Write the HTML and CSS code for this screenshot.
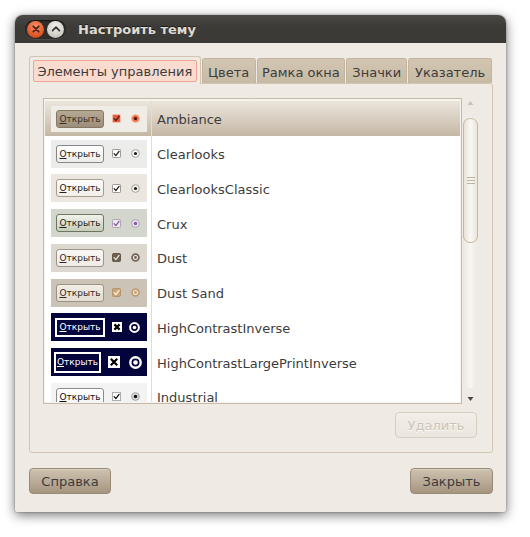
FILE: index.html
```html
<!DOCTYPE html>
<html lang="ru">
<head>
<meta charset="utf-8">
<title>Настроить тему</title>
<link rel="stylesheet" href="styles.css">
</head>
<body>
<div class="window">
  <div class="titlebar">
    <div class="wbtns">
      <span class="wb close"><svg width="16" height="16" viewBox="0 0 16 16"><path d="M5.3 5.3l5.4 5.4M10.7 5.3l-5.4 5.4" class="x"/></svg></span>
      <span class="wb max"><svg width="16" height="16" viewBox="0 0 16 16"><path d="M4.6 9.6L8 6.2l3.4 3.4" class="chev"/></svg></span>
    </div>
    <div class="title">Настроить тему</div>
  </div>
  <div class="body">
    <div class="tabs">
      <div class="tab active"><span class="focus">Элементы управления</span></div>
      <div class="tab w-colors">Цвета</div>
      <div class="tab w-frame">Рамка окна</div>
      <div class="tab w-icons">Значки</div>
      <div class="tab w-pointer">Указатель</div>
    </div>
    <div class="panel">
      <div class="scrolled">
        <div class="tree">
          <div class="rows">
            <div class="row selected">
              <div class="pvcell"><div class="pv t-amb"><span class="pbtn"><u>О</u>ткрыть</span><svg class="cb" width="9" height="9" viewBox="0 0 10 10"><rect class="o" x=".5" y=".5" width="9" height="9" rx="1.5"/><path class="m" d="M2.3 5.2l2 2.1L7.8 2.6"/></svg><svg class="rd" width="9" height="9" viewBox="0 0 10 10"><circle class="o" cx="5" cy="5" r="4.3"/><circle class="d" cx="5" cy="5" r="1.7"/></svg></div></div>
              <div class="name">Ambiance</div>
            </div>
            <div class="row">
              <div class="pvcell"><div class="pv t-clear"><span class="pbtn"><u>О</u>ткрыть</span><svg class="cb" width="9" height="9" viewBox="0 0 10 10"><rect class="o" x=".5" y=".5" width="9" height="9" rx="1"/><path class="m" d="M2.3 5.2l2 2.1L7.8 2.6"/></svg><svg class="rd" width="9" height="9" viewBox="0 0 10 10"><circle class="o" cx="5" cy="5" r="4.3"/><circle class="d" cx="5" cy="5" r="1.8"/></svg></div></div>
              <div class="name">Clearlooks</div>
            </div>
            <div class="row">
              <div class="pvcell"><div class="pv t-clcl"><span class="pbtn"><u>О</u>ткрыть</span><svg class="cb" width="9" height="9" viewBox="0 0 10 10"><rect class="o" x=".5" y=".5" width="9" height="9" rx="1"/><path class="m" d="M2.3 5.2l2 2.1L7.8 2.6"/></svg><svg class="rd" width="9" height="9" viewBox="0 0 10 10"><circle class="o" cx="5" cy="5" r="4.3"/><circle class="d" cx="5" cy="5" r="1.8"/></svg></div></div>
              <div class="name">ClearlooksClassic</div>
            </div>
            <div class="row">
              <div class="pvcell"><div class="pv t-crux"><span class="pbtn"><u>О</u>ткрыть</span><svg class="cb" width="9" height="9" viewBox="0 0 10 10"><rect class="o" x=".5" y=".5" width="9" height="9" rx="1"/><path class="m" d="M2.3 5.2l2 2.1L7.8 2.6"/></svg><svg class="rd" width="9" height="9" viewBox="0 0 10 10"><circle class="o" cx="5" cy="5" r="4.3"/><circle class="d" cx="5" cy="5" r="2"/></svg></div></div>
              <div class="name">Crux</div>
            </div>
            <div class="row">
              <div class="pvcell"><div class="pv t-dust"><span class="pbtn"><u>О</u>ткрыть</span><svg class="cb" width="9" height="9" viewBox="0 0 10 10"><rect class="o" x=".5" y=".5" width="9" height="9" rx="1.5"/><path class="m" d="M2.3 5.2l2 2.1L7.8 2.6"/></svg><svg class="rd" width="9" height="9" viewBox="0 0 10 10"><circle class="o" cx="5" cy="5" r="3.8"/><circle class="d" cx="5" cy="5" r="1.6"/></svg></div></div>
              <div class="name">Dust</div>
            </div>
            <div class="row">
              <div class="pvcell"><div class="pv t-sand"><span class="pbtn"><u>О</u>ткрыть</span><svg class="cb" width="9" height="9" viewBox="0 0 10 10"><rect class="o" x=".5" y=".5" width="9" height="9" rx="1.5"/><path class="m" d="M2.3 5.2l2 2.1L7.8 2.6"/></svg><svg class="rd" width="9" height="9" viewBox="0 0 10 10"><circle class="o" cx="5" cy="5" r="3.8"/><circle class="d" cx="5" cy="5" r="1.6"/></svg></div></div>
              <div class="name">Dust Sand</div>
            </div>
            <div class="row">
              <div class="pvcell"><div class="pv t-hc"><span class="pbtn"><u>О</u>ткрыть</span><svg class="cb" width="10" height="10" viewBox="0 0 10 10"><rect class="o" x="0" y="0" width="10" height="10"/><path class="m" d="M2.4 2.4l5.2 5.2M7.6 2.4l-5.2 5.2"/></svg><svg class="rd" width="11" height="11" viewBox="0 0 11 11"><circle class="o" cx="5.5" cy="5.5" r="4.4"/><circle class="d" cx="5.5" cy="5.5" r="1.8"/></svg></div></div>
              <div class="name">HighContrastInverse</div>
            </div>
            <div class="row">
              <div class="pvcell"><div class="pv t-hc t-lp"><span class="pbtn"><u>О</u>ткрыть</span><svg class="cb" width="12" height="12" viewBox="0 0 12 12"><rect class="o" x="0" y="0" width="12" height="12"/><path class="m" d="M2.8 2.8l6.4 6.4M9.2 2.8l-6.4 6.4"/></svg><svg class="rd" width="13" height="13" viewBox="0 0 13 13"><circle class="o" cx="6.5" cy="6.5" r="5.2"/><circle class="d" cx="6.5" cy="6.5" r="2.3"/></svg></div></div>
              <div class="name">HighContrastLargePrintInverse</div>
            </div>
            <div class="row">
              <div class="pvcell"><div class="pv t-ind"><span class="pbtn"><u>О</u>ткрыть</span><svg class="cb" width="9" height="9" viewBox="0 0 10 10"><rect class="o" x=".5" y=".5" width="9" height="9"/><path class="m" d="M2.3 5.2l2 2.1L7.8 2.6"/></svg><svg class="rd" width="9" height="9" viewBox="0 0 10 10"><circle class="o" cx="5" cy="5" r="4.3"/><circle class="d" cx="5" cy="5" r="2"/></svg></div></div>
              <div class="name">Industrial</div>
            </div>
          </div>
        </div>
        <div class="vscroll">
          <svg class="arrow" width="15" height="10" viewBox="0 0 15 10"><path d="M4.5 7h6L7.5 3z" class="up"/></svg>
          <div class="trough"><div class="thumb"><svg width="8" height="7" viewBox="0 0 8 7"><path d="M0 .5h8M0 3.5h8M0 6.5h8" class="grip"/></svg></div></div>
          <svg class="arrow" width="15" height="10" viewBox="0 0 15 10"><path d="M4.5 3h6L7.5 7z" class="down"/></svg>
        </div>
      </div>
      <div class="panel-actions">
        <button class="btn disabled">Удалить</button>
      </div>
    </div>
    <div class="dialog-actions">
      <button class="btn">Справка</button>
      <button class="btn">Закрыть</button>
    </div>
  </div>
</div>
</body>
</html>
```
FILE: styles.css
```css
* { box-sizing: border-box; }
html, body { margin: 0; padding: 0; }
body {
  background: #ffffff;
  width: 530px;
  height: 537px;
  overflow: hidden;
  font-family: "DejaVu Sans", sans-serif;
  font-size: 13px;
  color: #3c3c3c;
}
.window {
  margin: 15px 0 0 15px;
  width: 491px;
  height: 497px;
  background: #efebe4;
  border-radius: 8px 8px 2px 2px;
  box-shadow: 0 3px 12px rgba(0, 0, 0, 0.55), 0 0 2px rgba(0, 0, 0, 0.4);
  overflow: hidden;
  display: flex;
  flex-direction: column;
}
.titlebar {
  height: 28px;
  flex: none;
  background: linear-gradient(#4a4945, #3c3b37 40%, #3a3935);
  display: flex;
  align-items: center;
  padding-left: 10px;
}
.wbtns {
  display: flex;
  align-items: center;
  gap: 3px;
  padding: 1px 2px;
  border-radius: 10px;
  background: #2e2d2a;
  box-shadow: inset 0 1px 1px rgba(0,0,0,0.5), 0 1px 0 rgba(255,255,255,0.08);
}
.wb {
  width: 17px;
  height: 17px;
  border-radius: 50%;
  display: flex;
  align-items: center;
  justify-content: center;
}
.wb svg { display: block; }
.close { background: radial-gradient(circle at 50% 30%, #f6916a, #e05a2a 60%, #c8461a); }
.max { background: radial-gradient(circle at 50% 30%, #f2f1ee, #d4d1ca 60%, #b7b3aa); }
.x { stroke: #4a2414; stroke-width: 1.8; fill: none; stroke-linecap: round; }
.chev { stroke: #3a3935; stroke-width: 1.8; fill: none; stroke-linecap: round; stroke-linejoin: round; }
.title {
  margin-left: 12px;
  font-weight: bold;
  font-size: 13px;
  color: #dfdbd2;
  text-shadow: 0 -1px 0 #1e1d1b;
  padding-top: 1px;
}
.body {
  flex: 1;
  padding: 13px 13px 0 14px;
  display: flex;
  flex-direction: column;
}
.tabs {
  height: 27px;
  display: flex;
  align-items: flex-end;
  position: relative;
  z-index: 1;
}
.tab {
  height: 25px;
  background: linear-gradient(#d2c6b3, #c7baa4);
  border: 1px solid #c2b49e;
  border-bottom: none;
  border-radius: 3px 3px 0 0;
  display: flex;
  align-items: center;
  justify-content: center;
  color: #3c3c3c;
  padding-top: 2px;
  margin-right: 1px;
}
.tab.active {
  height: 28px;
  margin-bottom: -1px;
  width: 172px;
  background: #efebe4;
  border-color: #d2c6b3;
  padding: 3px 3px 2px 3px;
  align-items: stretch;
}
.focus {
  flex: 1;
  display: flex;
  align-items: center;
  justify-content: center;
  background: #f9dbcf;
  border: 1px solid #eea690;
  border-radius: 2px;
  padding-top: 1px;
}
.w-colors { width: 54px; }
.w-frame { width: 89px; }
.w-icons { width: 61px; }
.w-pointer { width: 84px; }
.panel {
  height: 370px;
  border: 1px solid #d2c6b3;
  border-radius: 0 3px 3px 3px;
  padding: 14px 14px 0 13px;
  display: flex;
  flex-direction: column;
}
.scrolled {
  height: 306px;
  display: flex;
  gap: 1px;
}
.tree {
  width: 419px;
  height: 306px;
  border: 1px solid #c7baa6;
  padding: 2px 1px 1px 1px;
  background: #f6f3ee;
  overflow: hidden;
}
.rows {
  background: #ffffff;
  height: 100%;
  overflow: hidden;
}
.row {
  height: 34.75px;
  display: flex;
  align-items: center;
}
.row.selected {
  background: linear-gradient(#ebe5dc, #d9cfc1 50%, #c4b7a4);
}
.pvcell {
  width: 107px;
  height: 100%;
  flex: none;
  border-right: 1px solid #e2ddd4;
  display: flex;
  align-items: center;
  padding-left: 6px;
  padding-top: 1px;
}
.name {
  padding-left: 5px;
  padding-top: 3px;
  white-space: nowrap;
  color: #3c3c3c;
}
.pv {
  width: 96px;
  height: 28px;
  display: flex;
  align-items: center;
  padding-left: 5px;
}
.pv svg { display: block; flex: none; }
.pbtn {
  width: 48px;
  height: 18px;
  flex: none;
  border: 1px solid #8b8b88;
  border-radius: 3px;
  font-size: 9px;
  line-height: 16px;
  text-align: center;
  color: #222;
  white-space: nowrap;
  overflow: hidden;
}
.pbtn u { text-decoration: underline; }
.pv .cb { margin-left: 8px; }
.pv .rd { margin-left: 10px; }
.cb .m { fill: none; stroke-width: 1.4; stroke-linecap: round; stroke-linejoin: round; }
.rd .o { stroke-width: 1; }

/* Ambiance */
.t-amb { background: #f0ece6; height: 26px; }
.t-amb .pbtn { background: linear-gradient(#b6a994, #9d8e7a); border-color: #877865; color: #3a3126; }
.t-amb .cb .o { fill: #e65a3c; stroke: #f6c2b4; }
.t-amb .cb .m { stroke: #4a1a10; }
.t-amb .rd .o { fill: #ef6a47; stroke: #f7b8a4; }
.t-amb .rd .d { fill: #3a1208; }
/* Clearlooks */
.t-clear { background: #ececea; }
.t-clear .pbtn { background: linear-gradient(#ffffff, #ecece9); border-color: #86868a; }
.t-clear .cb .o { fill: #fff; stroke: #8b8b8b; }
.t-clear .cb .m { stroke: #1e1e1e; }
.t-clear .rd .o { fill: #fafafa; stroke: #999; }
.t-clear .rd .d { fill: #1e1e1e; }
/* ClearlooksClassic */
.t-clcl { background: #ebe7e0; }
.t-clcl .pbtn { background: linear-gradient(#fdfcfb, #f2efea); border-color: #a89c8b; }
.t-clcl .cb .o { fill: #fff; stroke: #8e877c; }
.t-clcl .cb .m { stroke: #1e1e1e; }
.t-clcl .rd .o { fill: #f6f4f0; stroke: #a09888; }
.t-clcl .rd .d { fill: #1e1e1e; }
/* Crux */
.t-crux { background: #d3d6cc; }
.t-crux .pbtn { background: linear-gradient(#f1f3eb, #c6ccb8); border-color: #6d7660; color: #1d1d1d; }
.t-crux .cb .o { fill: #ece9ef; stroke: #a49bae; }
.t-crux .cb .m { stroke: #84559e; }
.t-crux .rd .o { fill: #ebe8ee; stroke: #a49bae; }
.t-crux .rd .d { fill: #8a5aa8; }
/* Dust */
.t-dust { background: #dcd7cf; }
.t-dust .pbtn { background: linear-gradient(#faf8f5, #efebe5); border-color: #9d968a; color: #2e2a25; }
.t-dust .cb .o { fill: #6f6152; stroke: #5b4e41; }
.t-dust .cb .m { stroke: #e9e4dc; }
.t-dust .rd .o { fill: #eeeae4; stroke: #75665a; stroke-width: 2; }
.t-dust .rd .d { fill: #75665a; }
/* Dust Sand */
.t-sand { background: #cbc3b6; }
.t-sand .pbtn { background: linear-gradient(#f2ede6, #e3ddd2); border-color: #9c9284; color: #2e2a25; }
.t-sand .cb .o { fill: #c9a67a; stroke: #b38f63; }
.t-sand .cb .m { stroke: #f8f2e8; }
.t-sand .rd .o { fill: #f1ebe1; stroke: #c39d72; stroke-width: 2; }
.t-sand .rd .d { fill: #c39d72; }
/* High contrast inverse */
.t-hc { background: #04043c; padding-left: 4px; }
.t-hc .pbtn { background: #04043c; border: 2px solid #ffffff; border-radius: 0; color: #ffffff; width: 50px; height: 19px; line-height: 15px; }
.t-hc .cb { margin-left: 7px; }
.t-hc .rd { margin-left: 7px; }
.t-hc .cb .o { fill: #ffffff; }
.t-hc .cb .m { stroke: #000000; stroke-width: 2.2; stroke-linecap: butt; }
.t-hc .rd .o { fill: #04043c; stroke: #ffffff; stroke-width: 2; }
.t-hc .rd .d { fill: #ffffff; }
.t-lp { padding-left: 3px; }
.t-lp .pbtn { width: 47px; height: 21px; line-height: 17px; border: 2px solid #ffffff; font-size: 9px; }
.t-lp .cb { margin-left: 7px; }
.t-lp .rd { margin-left: 9px; }
.t-lp .rd .o { stroke-width: 2.4; }
/* Industrial */
.t-ind { background: #f3f3f3; }
.t-ind .pbtn { background: linear-gradient(#ffffff, #f4f4f4); border-color: #8c8c8c; color: #111; }
.t-ind .cb .o { fill: #fff; stroke: #a5a5a5; }
.t-ind .cb .m { stroke: #111; }
.t-ind .rd .o { fill: #dedede; stroke: #9a9a9a; }
.t-ind .rd .d { fill: #111; }

/* scrollbar */
.vscroll {
  width: 15px;
  flex: none;
  display: flex;
  flex-direction: column;
  align-items: stretch;
}
.arrow { display: block; flex: none; }
.vscroll .up { fill: #cbc2b4; }
.vscroll .down { fill: #4a4844; }
.trough {
  flex: 1;
  margin: 9px 0 6px;
  background: linear-gradient(90deg, #ebe7e0, #f8f6f2 50%, #ece8e1);
  border-radius: 8px;
  padding-top: 1px;
}
.thumb {
  height: 125px;
  border: 1px solid #c7b79c;
  border-radius: 7px;
  background: linear-gradient(90deg, #e9e3d8, #f9f8f5 50%, #ebe5db);
  display: flex;
  align-items: center;
  justify-content: center;
}
.thumb svg { display: block; }
.grip { stroke: #bfb3a0; stroke-width: 1; fill: none; }

/* buttons */
.btn {
  font-family: "DejaVu Sans", sans-serif;
  font-size: 13px;
  height: 26px;
  width: 82px;
  padding: 1px 0 0;
  color: #3c3c3c;
  border: 1px solid #9a8b76;
  border-radius: 4px;
  background: linear-gradient(#cdc1af, #b6a895 60%, #a5957f);
  box-shadow: inset 0 1px 0 rgba(255,255,255,0.25);
}
.btn.disabled {
  color: #cbc3b6;
  text-shadow: 0 1px 0 #ffffff;
  border-color: #d8cebf;
  background: linear-gradient(#f2eee8, #ebe6de);
  box-shadow: none;
}
.panel-actions {
  display: flex;
  justify-content: flex-end;
  margin-top: 8px;
  padding-right: 1px;
}
.dialog-actions {
  display: flex;
  justify-content: space-between;
  margin-top: 15px;
}
.dialog-actions .btn:last-child { width: 83px; }
```
